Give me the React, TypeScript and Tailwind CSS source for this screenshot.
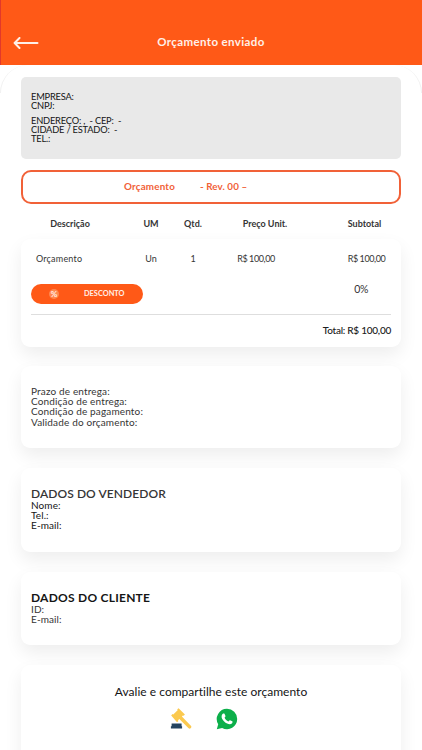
import type { ReactNode } from 'react';

const COLUMNS = ['Descrição', 'UM', 'Qtd.', 'Preço Unit.', 'Subtotal'];

const CONDITIONS = [
  'Prazo de entrega:',
  'Condição de entrega:',
  'Condição de pagamento:',
  'Validade do orçamento:',
];

const GRID = 'grid grid-cols-[98px_64px_20px_124px_75px] text-center whitespace-nowrap';

function Card({ className, children }: { className: string; children: ReactNode }) {
  return (
    <section className={`rounded-[9px] bg-white shadow-[0_8px_18px_rgba(0,0,0,0.07)] ${className}`}>
      {children}
    </section>
  );
}

function GavelIcon() {
  return (
    <svg width="22" height="22" viewBox="0 0 22 22">
      <path
        fill="#fbc94f"
        d="M1.2 7.4 2.5 6l.8.4L7.6 2.200l-.3-.9L8.600.2l6.300 6.200-1.200 1.300-.8-.3-1 1 9.200 9.600c1 1.500-1 3.500-2.500 2.300L9.300 11l-1.300 1.200.3 1L7 14.300z"
      />
      <path fill="#24435f" d="M1.6 15.6h10v2.600h.5v2.400H.9v-2.400h.7z" />
    </svg>
  );
}

function WhatsAppIcon() {
  return (
    <svg width="22" height="22" viewBox="0 0 22 22">
      <path
        fill="#0caf4a"
        d="M11 .8A10.2 10.2 0 0 1 21.2 11 10.2 10.2 0 0 1 6.1 20L.8 21.3l1.4-5.1A10.2 10.2 0 0 1 11 .8z"
      />
      <path
        fill="#fff"
        d="M6.8 5.7c.4-.4 1.4-.4 1.7.1l1 2.3c.2.5-.7 1.2-.9 1.6.8 1.7 2 2.9 3.8 3.7.4-.2 1.1-1.4 1.6-1.2l2.3 1.1c.4.3.2 1.5-.2 2-1.4 1.3-3.2 1-5 .2-2.2-1-3.8-2.7-5-4.8-.8-1.7-.7-3.7.7-5z"
      />
    </svg>
  );
}

export default function App() {
  return (
    <div className="h-[750px] overflow-hidden bg-white font-['Lato','Open_Sans',sans-serif] text-[#353535]">
      <header className="grid h-[65px] grid-cols-[40px_1fr_40px] items-center bg-[#ff5917] bg-linear-to-r from-[#e2382b] from-[1px] to-[#ff5917] to-[1px] pt-[21px] text-[#fff0e8]">
        <svg className="ml-[13px]" width="26" height="12" viewBox="0 0 26 12" fill="none" stroke="currentColor" strokeWidth="2">
          <path d="M24.5 6H2M6.5 1 1.600 6l4.900 5" strokeLinecap="round" strokeLinejoin="round" />
        </svg>
        <h1 className="-mt-[2px] text-center text-[11.5px] font-bold tracking-[0.38px]">Orçamento enviado</h1>
      </header>

      <main className="relative h-[685px] px-[21px] pt-3">
        {/* Rounded top edge of the sheet */}
        <div className="pointer-events-none absolute inset-x-0 top-0 h-7 rounded-t-[28px] border-x border-[#f1f1f1]" />

        <section className="h-[82px] rounded-[5px] bg-[#e9e9e9] pt-[15px] pl-[10px] text-[9.3px] leading-[9px] tracking-[-0.2px] text-[#151515]">
          <p>EMPRESA:</p>
          <p>CNPJ:</p>
          <p className="mt-[6px] whitespace-pre">ENDEREÇO: ,  - CEP:  -</p>
          <p className="whitespace-pre">CIDADE / ESTADO:  -</p>
          <p>TEL.:</p>
        </section>

        <section className="mt-[11px] flex h-[34px] items-center rounded-[10px] border-2 border-[#f16138] pb-[2px] pl-[101px] text-[9.8px] font-bold tracking-[0.2px] text-[#f16138]">
          <span className="w-[76px]">Orçamento</span>
          <span className="tracking-[0.1px]">- Rev. 00 –</span>
        </section>

        <div className={`${GRID} mt-[13px] h-[14px] text-[9px] leading-[14px] font-bold`}>
          {COLUMNS.map((column) => (
            <span key={column}>{column}</span>
          ))}
        </div>

        <Card className="mt-[8px] h-[108px] pt-[13px]">
          <div className={`${GRID} text-[9px] leading-[14px]`}>
            <span className="pl-[15px] text-left tracking-[0.2px]">Orçamento</span>
            <span>Un</span>
            <span>1</span>
            <span className="pr-[18px] tracking-[-0.4px]">R$ 100,00</span>
            <span className="pl-1 tracking-[-0.4px]">R$ 100,00</span>
          </div>
          <div className="mt-[18px] flex justify-between pr-[33px] pl-[10px]">
            <button className="flex h-5 w-[112px] items-center rounded-full bg-[#ff5917] pl-[18px] text-[7.4px] font-bold text-[#fff0e8]">
              <span className="flex size-[10px] items-center justify-center rounded-full bg-[#ff8850] text-[8px]">%</span>
              <span className="ml-[25px]">DESCONTO</span>
            </button>
            <span className="-mt-[2px] text-[10.5px] leading-[14px] tracking-[-0.4px]">0%</span>
          </div>
          <div className="mx-[10px] mt-[10px] border-t border-[#dedede] pt-[8px] text-right text-[10px] leading-[14px] font-medium tracking-[-0.25px] text-[#202020]">
            Total: R$ 100,00
          </div>
        </Card>

        <Card className="mt-[19px] h-[82px] pt-5 pl-[10px] text-[10px] leading-[10.2px] tracking-[0.15px]">
          {CONDITIONS.map((condition) => (
            <p key={condition}>{condition}</p>
          ))}
        </Card>

        <Card className="mt-5 h-[84px] pt-[19px] pl-[10px] text-[10px] leading-[10px] tracking-[0.1px] text-[#151515]">
          <h2 className="mb-[-1px] text-[12px] leading-[14px] font-semibold tracking-[0.08px] text-[#353535]">DADOS DO VENDEDOR</h2>
          <p>Nome:</p>
          <p>Tel.:</p>
          <p>E-mail:</p>
        </Card>

        <Card className="mt-5 h-[73px] pt-[19px] pl-[10px] text-[10px] leading-[10px] tracking-[0.1px]">
          <h2 className="mb-[-1px] text-[12px] leading-[14px] font-bold tracking-[0.25px] text-[#151515]">DADOS DO CLIENTE</h2>
          <p>ID:</p>
          <p>E-mail:</p>
        </Card>

        <Card className="mt-5 h-[100px] pt-[19px] text-center text-[12px] leading-[16px] text-[#151515]">
          <p className="tracking-[0.03px]">Avalie e compartilhe este orçamento</p>
          <div className="mt-2 flex justify-center gap-[24px] pr-[14px]">
            <GavelIcon />
            <WhatsAppIcon />
          </div>
        </Card>
      </main>
    </div>
  );
}
